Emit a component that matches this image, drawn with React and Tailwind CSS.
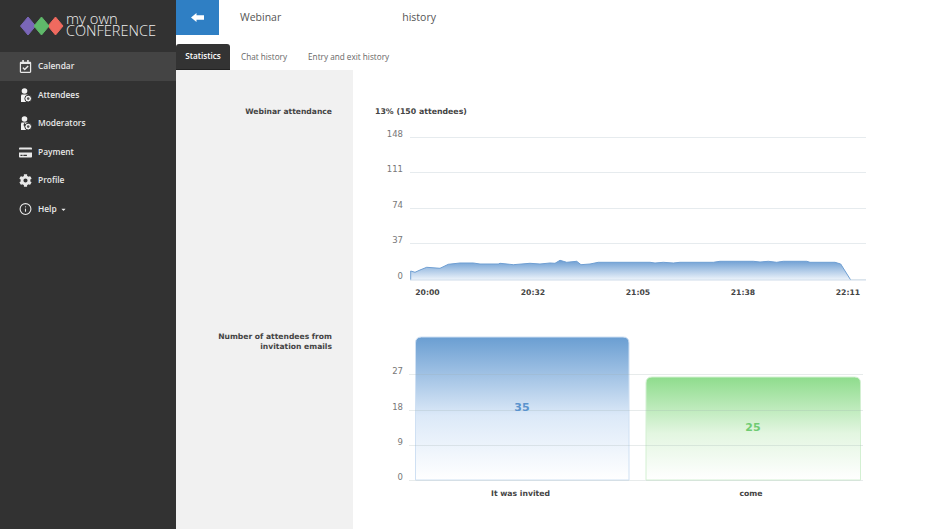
import React from "react";
import { FaCog, FaCreditCard, FaRegCalendarCheck, FaCaretDown } from "react-icons/fa";
import { FiInfo } from "react-icons/fi";

function PersonIcon({ tie }) {
  return (
    <svg width="13" height="15" viewBox="0 0 13 15" className="block">
      <circle cx="5.5" cy="3" r="2.8" fill="#f2f2f2" />
      <path d="M2.5 6.5 H8.5 L10 9 V14 H2 V8 Z" fill="#f2f2f2" />
      {tie && <path d="M5.5 6.5 L6.5 9 L5.5 11 L4.5 9 Z" fill="#323232" />}
      <circle cx="9.2" cy="10.6" r="3.4" fill="#f2f2f2" stroke="#323232" strokeWidth="1" />
      <circle cx="9.2" cy="10.6" r="1.3" fill="#555" />
    </svg>
  );
}

const navItems = [
  { label: "Calendar", icon: <FaRegCalendarCheck size={13} />, active: true },
  { label: "Attendees", icon: <PersonIcon /> },
  { label: "Moderators", icon: <PersonIcon tie /> },
  { label: "Payment", icon: <FaCreditCard size={13} /> },
  { label: "Profile", icon: <FaCog size={13} /> },
  { label: "Help", icon: <FiInfo size={14} />, caret: true },
];

const areaPoints = [
  [92, 153], [105, 157], [120, 150], [140, 142], [180, 145], [205, 133], [240, 129], [280, 129],
  [300, 132], [355, 132], [360, 130], [400, 134], [450, 130], [480, 132], [510, 129], [525, 130],
  [540, 121], [560, 127], [590, 124], [603, 134], [630, 132], [655, 127], [810, 127], [825, 129],
  [850, 127], [880, 129], [900, 127], [1000, 127], [1020, 124], [1120, 124], [1140, 126], [1165, 124],
  [1190, 127], [1210, 124], [1280, 124], [1290, 127], [1365, 127], [1382, 132], [1412, 180],
];

const linePath = areaPoints.map(([x, y]) => `${(x / 3).toFixed(1)},${(y / 3 + 95).toFixed(1)}`).join(" L");

function AttendanceChart() {
  return (
    <svg width="490" height="190" viewBox="0 0 490 190" className="block" fontFamily="'DejaVu Sans', sans-serif">
      <defs>
        <linearGradient id="area" x1="0" y1="0" x2="0" y2="1">
          <stop offset="0" stopColor="#6c9dd2" />
          <stop offset="1" stopColor="#eef4fb" />
        </linearGradient>
      </defs>
      {[
        ["148", 12],
        ["111", 47],
        ["74", 83],
        ["37", 118],
        ["0", 154],
      ].map(([label, y]) => (
        <g key={label}>
          <line x1="30" x2="486" y1={y + 0.5} y2={y + 0.5} stroke="#e6ebee" />
          <text x="23" y={y + 0} textAnchor="end" fontSize="8.5" fill="#777">{label}</text>
        </g>
      ))}
      <path d={`M30.7,155 L${linePath} L470.7,155 Z`} fill="url(#area)" />
      <path d={`M30.7,155 L${linePath}`} fill="none" stroke="#6f9fd3" strokeWidth="1" />
      <line x1="30" x2="486" y1="155" y2="155" stroke="#cfdcea" />
      {[
        ["20:00", 47.5],
        ["20:32", 153],
        ["21:05", 258],
        ["21:38", 363],
        ["22:11", 468],
      ].map(([label, x]) => (
        <text key={label} x={x} y="169.5" textAnchor="middle" fontSize="7.7" fontWeight="700" fill="#444">{label}</text>
      ))}
    </svg>
  );
}

function InvitesChart() {
  return (
    <svg width="490" height="180" viewBox="0 0 490 180" className="block" fontFamily="'DejaVu Sans', sans-serif">
      <defs>
        <linearGradient id="blueBar" x1="0" y1="0" x2="0" y2="1">
          <stop offset="0" stopColor="#6a9ed2" />
          <stop offset="0.55" stopColor="#dce9f8" />
          <stop offset="1" stopColor="#ffffff" />
        </linearGradient>
        <linearGradient id="greenBar" x1="0" y1="0" x2="0" y2="1">
          <stop offset="0" stopColor="#8edc8c" />
          <stop offset="0.55" stopColor="#e3f6e1" />
          <stop offset="1" stopColor="#ffffff" />
        </linearGradient>
      </defs>
      <path d="M35.5,155 V18 Q35.5,12 41.5,12 H243 Q249,12 249,18 V155 Z" fill="url(#blueBar)" stroke="#cfe0f3" />
      <path d="M266,155 V58 Q266,52 272,52 H474.5 Q480.5,52 480.5,58 V155 Z" fill="url(#greenBar)" stroke="#d3f0d2" />
      {[
        ["27", 49],
        ["18", 85],
        ["9", 120],
        ["0", 155],
      ].map(([label, y]) => (
        <g key={label}>
          <line x1="29" x2="483" y1={y + 0.5} y2={y + 0.5} stroke="#9fb0b0" strokeOpacity="0.25" />
          <text x="23" y={y + 0} textAnchor="end" fontSize="8.5" fill="#777">{label}</text>
        </g>
      ))}
      <text x="142" y="86" textAnchor="middle" fontSize="11" fontWeight="700" fill="#5b93cd">35</text>
      <text x="373" y="106" textAnchor="middle" fontSize="11" fontWeight="700" fill="#6fcb72">25</text>
      <text x="140.5" y="170.5" textAnchor="middle" fontSize="7.7" fontWeight="700" fill="#444">It was invited</text>
      <text x="371" y="170.5" textAnchor="middle" fontSize="7.7" fontWeight="700" fill="#444">come</text>
    </svg>
  );
}

export default function App() {
  return (
    <div className="flex w-[943px] h-[529px] overflow-hidden bg-white font-['DejaVu_Sans',sans-serif]">
      {/* Sidebar */}
      <aside className="w-[176px] shrink-0 bg-[#323232] text-white">
        <div className="h-[52px] flex items-center pl-[20px] pb-[1px]">
          <svg width="44" height="20" viewBox="0 0 44 20" className="block shrink-0">
            <polygon points="8,1 15.5,10 8,19 0.5,10" fill="#7a66b8" stroke="#7a66b8" strokeWidth="1" strokeLinejoin="round" />
            <polygon points="35.5,1 43,10 35.5,19 28,10" fill="#ef6a5f" stroke="#ef6a5f" strokeWidth="1" strokeLinejoin="round" />
            <polygon points="21.5,1 29,10 21.5,19 14,10" fill="#5fb96a" stroke="#5fb96a" strokeWidth="1" strokeLinejoin="round" />
          </svg>
          <div className="ml-[2px] font-['Open_Sans',sans-serif] font-light text-[#eeeeee]">
            <div className="text-[14.8px] leading-[7px] h-[10px]">my own</div>
            <div className="text-[14.5px] leading-[11px] h-[11px]">CONFERENCE</div>
          </div>
        </div>
        <nav>
          {navItems.map((item) => (
            <div
              key={item.label}
              className={`h-[28.5px] pt-[1px] flex items-center pl-[19px] gap-[6px] font-['Open_Sans',sans-serif] text-[8.4px] font-semibold text-[#e8e8e8] ${item.active ? "bg-[#444444]" : ""}`}
            >
              <span className="w-[13px] flex justify-center">{item.icon}</span>
              <span>{item.label}</span>
              {item.caret && <FaCaretDown size={7} className="-ml-[3px]" />}
            </div>
          ))}
        </nav>
      </aside>

      {/* Main */}
      <main className="flex-1 flex flex-col min-w-0">
        <div className="h-[44px] shrink-0 flex items-start">
          <button className="w-[43px] h-[35px] bg-[#2f7fc4] flex items-center justify-center text-white">
            <svg width="13" height="9" viewBox="0 0 13 9" className="block">
              <path d="M0 4.5 L5.5 0 V2.3 H13 V6.7 H5.5 V9 Z" fill="#ffffff" />
            </svg>
          </button>
          <div className="h-[35px] flex items-center ml-[21px] font-['Open_Sans',sans-serif] text-[10.5px] text-[#555]">
            <span>Webinar</span>
            <span className="ml-[121px]">history</span>
          </div>
        </div>

        <div className="h-[26px] shrink-0 flex items-center font-['Open_Sans',sans-serif] text-[8.2px] text-[#666]">
          <div className="w-[54px] h-full bg-[#333333] rounded-t-[3px] border-b border-[#222] flex items-center justify-center text-white font-semibold">
            Statistics
          </div>
          <span className="ml-[11px]">Chat history</span>
          <span className="ml-[21px]">Entry and exit history</span>
        </div>

        <div className="flex-1 flex flex-col min-h-0">
          <div className="h-[255px] flex">
            <div className="w-[177px] shrink-0 bg-[#f1f1f1] pt-[36px] pr-[21px] text-right text-[7.6px] font-bold text-[#444]">
              Webinar attendance
            </div>
            <div className="pl-[22px] pt-[36px]">
              <p className="text-[7.8px] font-bold text-[#444] leading-[11px]">13% (150 attendees)</p>
              <div className="mt-[8px] ml-[5px]"><AttendanceChart /></div>
            </div>
          </div>
          <div className="flex-1 flex">
            <div className="w-[177px] shrink-0 bg-[#f1f1f1] pt-[7px] pr-[21px] text-right text-[7.6px] font-bold leading-[10px] text-[#444]">
              Number of attendees from
              <br />
              invitation emails
            </div>
            <div className="pl-[27px]">
              <InvitesChart />
            </div>
          </div>
        </div>
      </main>
    </div>
  );
}
